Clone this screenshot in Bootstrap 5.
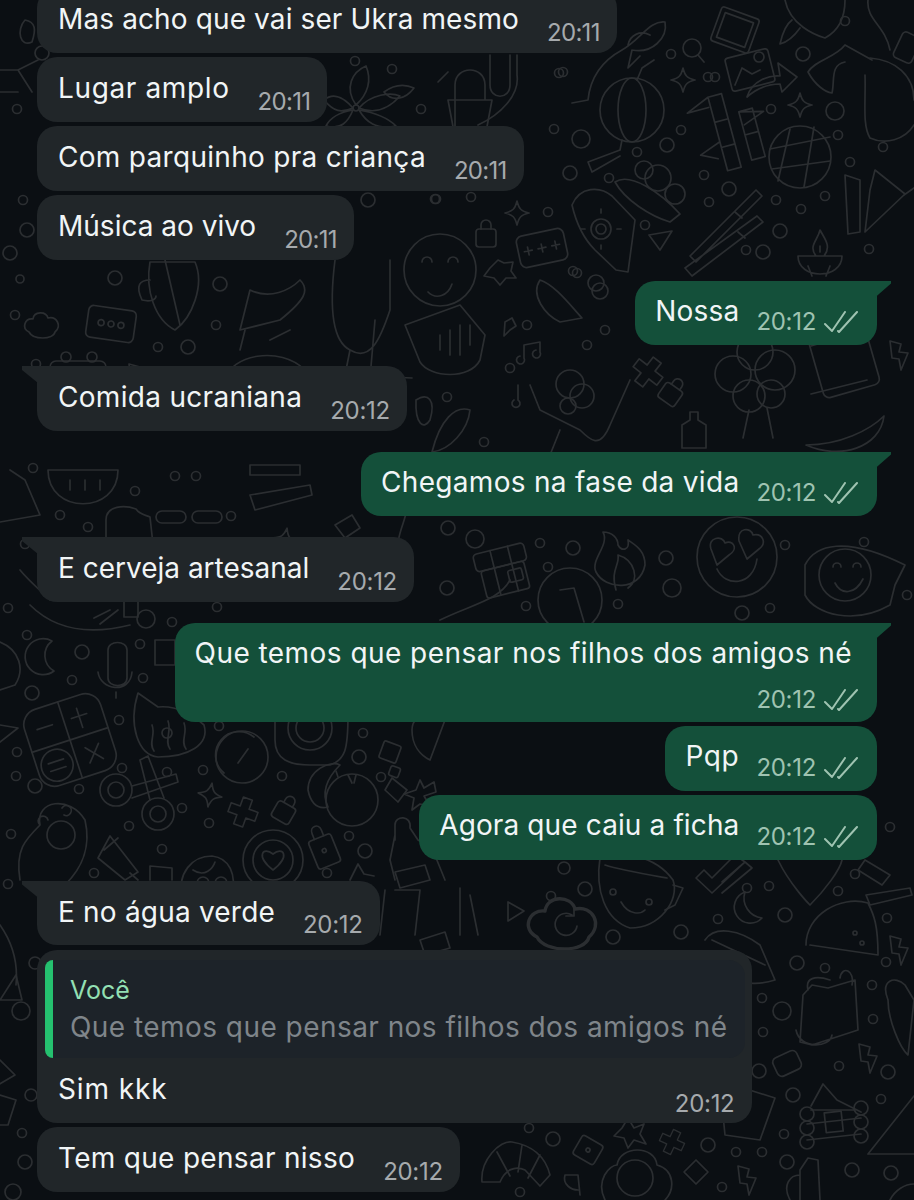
<!DOCTYPE html>
<html lang="pt-br">
<head>
  <meta charset="UTF-8">
  <title>Conversa</title>
  <link href="https://cdn.jsdelivr.net/npm/bootstrap@5.3.2/dist/css/bootstrap.min.css" rel="stylesheet">
  <style>
    body { background: #0b0f13; margin: 0; }
    .chat-screen { width: 914px; height: 1200px; background: #0b0f13; font-family: Inter, "Liberation Sans", sans-serif; }
    .doodles { position: absolute; left: 0; top: 0; }
    .doodles * { fill: none; stroke: #2b2e31; stroke-width: 1.7; stroke-linecap: round; stroke-linejoin: round; }
    .chat-flow { padding: 0 37px; margin-top: -12px; }
    .gap-same { margin-top: 4.5px; }
    .gap-new { margin-top: 21px; }
    .gap-first { margin-top: 0; }
    .bubble-in, .bubble-out { position: relative; border-radius: 20px; color: #f1f5f6; }
    .bubble-in { background: #212629; padding: 0 17px 0 21px; }
    .bubble-out { background: #14503a; padding: 0 19px 0 20px; }
    .has-tail.bubble-in { border-top-left-radius: 0; }
    .has-tail.bubble-out { border-top-right-radius: 0; }
    .has-tail::before { content: ""; position: absolute; top: 0; width: 16px; height: 17px; }
    .has-tail.bubble-in::before { left: -15px; background: #212629; clip-path: polygon(0 0, 100% 0, 100% 100%, 0 4px); }
    .has-tail.bubble-out::before { right: -14px; background: #14503a; clip-path: polygon(0 0, 100% 0, 100% 3px, 0 100%); }
    .msg-text { font-size: 28px; line-height: 36px; padding: 12px 0 16.5px; white-space: nowrap; }
    .bubble-in .msg-text { padding: 13px 0 15.5px; }
    .msg-time { font-size: 24px; line-height: 24px; white-space: nowrap; letter-spacing: -.3px; }
    .bubble-in .msg-time { color: #a6aaad; padding-bottom: 8px; margin-left: 28px; }
    .bubble-in .time-11 { letter-spacing: -.7px; }
    .bubble-out .msg-time { color: #9fc3b1; padding-bottom: 11px; margin-left: 17px; gap: 8px; }
    .ticks { width: 34px; height: 22px; fill: none; stroke: #9fc3b1; stroke-width: 2; stroke-linecap: round; stroke-linejoin: round; }
    .bubble-out.bubble-tall { padding-right: 25px; }
    .bubble-tall .msg-text { padding-bottom: 0; }
    .bubble-tall .msg-time { margin: 17px -6px 0 0; padding-bottom: 10px; }
    .reply-bubble { padding: 10px 7px 0 8px; }
    .reply-box { background: #1d2329; border-radius: 8px 16px 16px 8px; border-left: 8px solid #25c16f; padding: 12px 18px 12px 17px; }
    .reply-name { font-size: 25px; line-height: 36px; color: #93e0b4; }
    .reply-quote { font-size: 28px; line-height: 38px; color: #7f858a; white-space: nowrap; letter-spacing: .45px; }
    .reply-foot { padding: 0 11px 0 13px; }
    .bubble-in .reply-foot .msg-text { padding: 13px 0 16px; }
    .reply-foot .msg-time { padding-bottom: 7px; }
    .track-0 { letter-spacing: 0; }
    .track-1 { letter-spacing: .12px; }
    .track-2 { letter-spacing: .2px; }
    .track-3 { letter-spacing: .3px; }
    .track-4 { letter-spacing: .45px; }
    .track-6 { letter-spacing: .63px; }
    .track-9 { letter-spacing: .9px; }
  </style>
</head>
<body>
  <main class="chat-screen position-relative overflow-hidden">
    <svg class="doodles" id="doodles" width="914" height="1200" viewBox="0 0 914 1200">
      <defs>
        <path id="sparkle" d="M0-12C2-4 4-2 12 0 4 2 2 4 0 12-2 4-4 2-12 0-4-2-2-4 0-12Z"/>
        <path id="bolt" d="M-8-14 3-11 1-3 10-2 3 15 1 4-6 3Z"/>
        <path id="plus" d="M-5-15H5V-5H15V5H5V15H-5V5H-15V-5H-5Z"/>
        <g id="lock"><rect x="-10" y="-6" width="20" height="18" rx="3"/><path d="M-5-6V-10A5 5 0 0 1 5-10V-6"/></g>
        <path id="puff" d="M-14 6C-22 2-18-8-10-7-9-15 3-15 5-8 14-10 19 0 12 6 10 14-10 14-14 6Z"/>
      </defs>
      <!-- topo direito -->
      <path d="M572 103 588 100C590 80 600 62 622 50 640 40 650 20 665 22 668 38 652 54 632 50M632 50 628 68 640 56M650 35C640 30 630 35 628 45"/>
      <circle cx="692" cy="48" r="9"/><path d="M698 55 704 62"/>
      <rect x="-20" y="-18" width="40" height="36" rx="3" transform="translate(735 30) rotate(20)"/>
      <rect x="-15" y="-13" width="30" height="26" transform="translate(735 30) rotate(20)"/>
      <rect x="-22" y="-17" width="44" height="34" rx="3" transform="translate(750 70) rotate(-14)"/>
      <circle cx="759" cy="57" r="5"/><path d="M735 85 742 68 752 74 760 70"/>
      <path d="M747 97C752 80 770 75 780 76L778 63 797 77 782 92 780 84C765 84 755 90 747 97Z"/>
      <path d="M785 0C790 25 815 35 825 38 840 30 845 15 845 0"/>
      <path d="M792 20C785 25 782 35 780 44 788 42 795 35 800 28"/>
      <path d="M808 72C815 60 835 58 845 45L872 60M808 72C815 85 825 92 832 93 835 80 830 65 845 62"/>
      <path d="M868 0C866 20 885 25 890 50M870 58C895 60 914 75 914 100M865 75C866 100 862 125 870 138 885 145 905 140 914 125"/>
      <rect x="-11" y="-14" width="20" height="28" rx="4" transform="translate(908 48) rotate(25)"/>
      <g transform="translate(632 110)"><circle r="32"/><ellipse rx="14" ry="32"/><path d="M5-30 10-42 22-50M-10 30-12 40-44 52-40 62-12 46"/></g>
      <use href="#sparkle" x="683" y="80"/><use href="#sparkle" x="800" y="105"/><use href="#sparkle" x="517" y="213"/>
      <g transform="translate(725 130) rotate(-15)"><path d="M-8-36V40H6V-36ZM-8-10H6M-8 16H6M18-14V36H32V-14ZM18 10H32M-8-36-32-26-10-26M18-14 42-8 20 0M-8 10-30 18-14 26"/></g>
      <g transform="translate(800 157)"><circle r="31"/><path d="M-30-8 30-20M-28 12 30 4M-10-28-22 24M14-30 4 30"/></g>
      <path d="M455 130V85C455 65 485 65 485 85V100M448 100H492L486 132H454ZM448 72 438 82"/>
      <path d="M517 55V75C520 95 500 115 478 125M490 55V85C490 100 510 100 510 85V55"/>
      <path d="M384 92C395 84 405 84 414 88 405 100 392 102 384 92Z"/>
      <path d="M572 205C580 186 600 186 612 196L635 220 628 272 616 270 595 250C580 235 575 218 572 205Z"/>
      <g transform="translate(601 229)"><circle r="5"/><circle r="10"/><path d="M0-16V-20M0 16V20M16 0H20M-16 0H-20"/></g>
      <g transform="translate(650 190)"><circle cx="-6" cy="-20" r="9"/><circle cx="8" cy="-12" r="13"/><circle cx="25" cy="4" r="10"/><path d="M-35-8C-20-18 10 2 30 24L20 32C0 26-25 10-35-8Z"/></g>
      <path d="M690 256 756 190 762 196 696 262ZM685 268 757 216 763 222 692 276ZM735 212 742 218M738 232 745 238"/>
      <g transform="translate(542 248) rotate(-12)"><rect x="-24" y="-16" width="48" height="32" rx="6"/><path d="M-14-4V4M-18 0H-10M0-4V4M-4 0H4M14-4V4M10 0H18"/></g>
      <use href="#lock" x="486" y="235"/>
      <g transform="translate(440 270)"><circle r="36"/><path d="M-18-8A5 5 0 0 1-8-8M8-8A5 5 0 0 1 18-8M-12 22C-4 30 8 26 12 14"/></g>
      <path d="M498 260 504 263 513 262 511 271 516 278 506 278 500 285 494 278 484 276 490 268Z"/>
      <path d="M649 235 672 231 660 250Z"/>
      <path d="M845 175 860 180 860 232 848 234ZM875 170 905 194 865 232 870 190ZM904 195 914 188"/>
      <g transform="translate(820 260)"><path d="M-22-4H22C22 20-22 20-22-4ZM-4-4C-12-14-2-20 0-30 4-22 12-14 4-4ZM0-8V-14M-12 6-8 16M10 6 6 16"/></g>
      <g transform="translate(356 108)"><circle r="3"/><path d="M0-3C-12-20-4-36 10-42 16-28 12-14 0-3ZM3 0C15-14 35-16 44-12 30 4 15 5 3 0ZM-3 0C-15-14-25-14-32-8-22 4-15 5-3 0ZM3 2C15 4 30 8 40 18 20 22 10 14 3 2ZM-3 2C-15 4-25 8-30 18-15 22-8 14-3 2Z"/></g>
      <path d="M0 70H18L38 60M18 70 32 92M-4 92 18 92"/>
      <path d="M25 20C16 30 20 48 32 42 36 30 36 22 25 20Z"/>
      <!-- meio -->
      <g transform="translate(845 360)"><rect x="-30" y="-30" width="58" height="62" rx="6" transform="rotate(-16)"/><path d="M-34-14 20-30M-34 34 22 20"/></g>
      <g transform="translate(755 380)"><circle cx="-22" cy="-6" r="18"/><circle cx="20" cy="-10" r="20"/><circle cx="0" cy="-28" r="18"/><circle cx="-6" cy="16" r="16"/><circle cx="16" cy="14" r="14"/><path d="M-6 30-12 58M12 28 18 58"/></g>
      <use href="#bolt" x="898" y="355"/>
      <use href="#plus" transform="translate(648 372) rotate(38)"/>
      <use href="#lock" transform="translate(672 392) rotate(35)"/>
      <path d="M806 445C840 445 870 430 884 416 880 448 840 460 806 445Z"/>
      <path d="M690 420V412H698V420L706 425V448H682V425Z"/>
      <g transform="translate(111 324) rotate(8)"><rect x="-24" y="-16" width="48" height="32" rx="5"/><circle cx="-10" r="3"/><circle r="3"/><circle cx="10" r="3"/></g>
      <use href="#puff" transform="translate(43 326)"/>
      <path d="M150 262C145 290 155 320 175 330 192 318 205 285 195 262ZM165 260 180 325M150 280C140 280 135 285 142 300 150 302 156 300 156 296"/>
      <path d="M240 330 250 290C270 300 290 290 300 280 310 290 305 300 280 320Z"/>
      <path d="M335 260C330 300 330 340 350 350 370 362 380 340 390 310V260M350 350 345 375 412 378M375 320 370 378"/>
      <path d="M405 325 460 305 485 335 480 360C470 380 430 378 420 362ZM440 335V350M450 330V355M460 325V355M470 325V345"/>
      <path d="M505 322 512 318 516 326 510 330 504 336Z"/>
      <path d="M540 280C555 285 570 305 582 318L560 322C545 315 530 295 540 280Z"/>
      <path d="M524 358 524 345 540 342 540 352M524 358A4 4 0 1 1 520 356M540 352A4 4 0 1 1 536 350"/>
      <path d="M518 385V400A4 4 0 1 1 514 400"/>
      <g transform="translate(570 400)"><circle cx="0" cy="-16" r="14"/><circle cx="12" cy="-4" r="12"/><circle cx="-2" cy="6" r="8"/><path d="M-40-15-30 10-10 20 10 30C20 40 30 50 40 25L60-20M-10 30-20 55"/></g>
      <path d="M432 452C440 420 455 405 470 410 468 430 450 450 432 452Z"/>
      <path d="M416 400C428 392 436 400 430 420 424 430 415 425 416 400Z"/>
      <path d="M225 380C230 355 280 345 305 370L290 385M240 350 245 330M270 340 290 330"/>
      <use href="#bolt" x="137" y="378"/>
      <g transform="translate(80 375)"><rect x="-30" y="-14" width="56" height="50" rx="6"/><circle cx="-14" cy="-18" r="5"/><circle cx="12" cy="-18" r="5"/></g>
      <path d="M165 385 195 370 210 388 210 420H165Z"/>
      <path d="M48 470H118C118 515 48 515 48 470ZM70 480V490M85 480V490M100 480V490"/>
      <path d="M0 522 40 515 25 480 10 470"/>
      <path d="M250 475H300V465H250ZM250 495 310 485 312 495 255 510Z"/>
      <rect x="156" y="511" width="30" height="12" rx="6"/><rect x="192" y="511" width="30" height="12" rx="6"/><rect x="205" y="548" width="30" height="12" rx="6"/><rect x="240" y="548" width="30" height="12" rx="6"/><rect x="253" y="579" width="30" height="12" rx="6"/>
      <g transform="translate(130 545)"><path d="M-24 50V-25C-24-40-5-40 6-36 10-30 16-30 20-28L28 45C10 55-10 55-24 50ZM-14-4-6 0-14 4M10-4 2 0 10 4M-6 14H8C8 30-4 30-6 14ZM-6 50V72H8V50"/></g>
      <use href="#sparkle" transform="translate(176 555) rotate(10)"/><use href="#sparkle" transform="translate(285 540) rotate(10)"/><use href="#sparkle" transform="translate(410 482) rotate(10)"/>
      <path d="M20 570C28 580 40 590 50 600L75 590C65 575 50 560 40 540"/>
      <path d="M335 525 352 515 360 528 345 538ZM325 540 340 555 335 575 370 590"/>
      <path d="M400 490C420 510 390 530 400 560"/>
      <g transform="translate(503 570) rotate(-14)"><rect x="-26" y="-22" width="52" height="18" rx="4"/><rect x="-22" y="-4" width="44" height="28" rx="3"/><path d="M-8-22V-4M10-22V-4M-8-4V24M10-4V24"/><rect x="4" y="2" width="14" height="12" rx="2"/></g>
      <path d="M603 532C610 545 590 560 596 572 605 590 640 592 645 565 645 550 635 545 628 540 630 550 622 552 618 545 618 538 612 532 603 532ZM616 590C610 570 620 565 618 555 635 560 640 580 628 588"/>
      <g transform="translate(737 557)"><circle r="40"/><path d="M-26-8C-30-20-14-22-12-14-4-18 2-8-8-2L-20 8ZM2-16C0-30 14-30 16-22 26-24 30-14 22-8L10 2ZM-20 12C-12 30 16 30 20 2"/></g>
      <g transform="translate(845 575)"><path d="M-40-10C-30-30 0-40 60-10L50 10 45 30C10 50-30 40-40 20Z"/><circle r="26"/><path d="M-12-8A4 4 0 0 1-4-8M8-8A4 4 0 0 1 16-8M-10 8C-4 20 10 20 18 4"/></g>
      <g transform="translate(570 600)"><circle r="32"/><path d="M-10-10 4-12 14 22"/></g>
      <path d="M440 620C470 605 500 600 510 580"/>
      <g transform="translate(70 740) rotate(-18)"><rect x="-40" y="-40" width="80" height="80" rx="16"/><path d="M0-40V40M-40 0H40M-28-20H-12M16-28V-8M8-20H24M12 12 26 28M26 12 12 28"/><circle cx="-20" cy="20" r="16"/><path d="M-28 16H-12M-28 24H-12"/></g>
      <g transform="translate(168 725)"><path d="M-30-32-10-18C10-20 25-10 36 0 42 20 20 32-10 32-30 30-40 0-30-32Z"/><path d="M-16 0C-12 10-20 18-14 26M0-4C4 6-4 16 2 24M16-2C20 8 12 16 18 24"/><circle cx="-1" cy="8" r="5"/></g>
      <g transform="translate(242 757)"><circle r="26"/><path d="M-18 16A22 22 0 0 1 12-20M6-8-4 6"/></g>
      <g transform="translate(140 790)"><circle cx="-24" cy="0" r="16"/><circle cx="-24" r="8"/><circle cx="18" cy="24" r="16"/><circle cx="18" cy="24" r="8"/><path d="M-8-4 36-16 38-8-8 8M10 10 0-30 8-34 24 8"/></g>
      <path d="M20 880C15 850 25 840 40 825 35 800 70 795 85 820 92 850 80 870 65 885M40 825A5 5 0 1 1 48 820M62 808A5 5 0 1 1 64 815"/>
      <circle cx="61" cy="835" r="14"/>
      <path d="M52 641A18 18 0 1 0 54 671 18 18 0 0 1 52 641Z"/>
      <path d="M108 670V650C108 640 127 640 127 650V678C127 688 108 688 108 678ZM98 672C100 690 130 695 132 672M116 692V698"/>
      <path d="M0 642C20 650 25 670 15 685L0 690M0 725 18 728 0 742"/>
      <path d="M30 605C55 630 90 635 130 625"/>
      <path d="M94 618 110 610M100 624 118 610"/>
      <path d="M155 640 175 640 175 665 155 665Z"/>
      <g transform="translate(310 730)"><path d="M-35-15V10C-35 30-20 35 0 35H20C35 30 38 20 38-15"/><circle cy="-2" r="14"/><circle cy="-2" r="22"/></g>
      <path d="M412 730C412 710 440 710 445 720L430 760C420 755 412 745 412 730Z"/>
      <g transform="translate(340 795)"><path d="M-32-5C-32-25-10-35 0-30-10-20-20-5-12 12-25 15-30 5-32-5Z"/><circle cx="12" cy="5" r="26"/><path d="M8-20 12-12M16-20 14-12M-4-24-2-18"/></g>
      <use href="#lock" transform="translate(285 810) rotate(30)"/>
      <use href="#sparkle" transform="translate(210 795) rotate(10)"/>
      <use href="#plus" transform="translate(243 812) rotate(20) scale(.95)"/>
      <g transform="translate(273 860)"><circle r="30"/><circle r="20"/><path d="M0 10C-18-4-10-14 0-6 10-14 18-4 0 10Z"/></g>
      <g transform="translate(207 878)"><path d="M-25 20C-30-5-15-22 5-22 22-20 30-5 25 20M-14-8C-2 0 6-10 8-16"/><circle cx="-4" cy="5" r="6"/><circle cx="14" cy="5" r="6"/></g>
      <path d="M98 858 110 836 138 872 125 880ZM104 850 118 838M130 873 138 880"/>
      <path d="M150 880 150 866 172 868 172 880"/>
      <g transform="translate(322 845) rotate(-22)"><rect x="-12" y="-8" width="24" height="30" rx="3"/><path d="M-5-8V-14C-5-22 5-22 5-14V-8"/><circle cy="6" r="2"/></g>
      <path d="M350 880 358 864 364 874 374 876"/>
      <path d="M395 840V825C395 815 412 815 410 828L418 840 432 848 445 880M395 835 390 860 395 880"/>
      <rect x="-8" y="-8" width="14" height="14" rx="2" transform="translate(393 578) rotate(20)"/>
      <g transform="translate(390 752)"><rect x="-9" y="-9" width="18" height="18" rx="2" transform="rotate(20)"/><rect x="6" y="12" width="10" height="10" rx="2" transform="rotate(20)"/></g>
      <path d="M392 778 407 790 398 802 385 790Z"/>
      <path d="M420 780 424 788 434 782 436 792 424 796 430 806 420 804 412 810 414 798 404 794 416 790Z"/>
      <!-- baixo -->
      <path d="M395 890H420L415 935M460 888V935M470 895 478 935M385 890 380 935"/>
      <path d="M395 872 425 865 430 880 400 888ZM420 940 445 932 450 948 425 955Z"/>
      <g transform="translate(635 880)"><path d="M-35-22C-15-30 20-25 38 0 45 20 25 48-5 48-30 40-40 10-35-22ZM-30-15C-15-10 15-5 32-2"/><circle cx="-22" cy="12" r="3"/><circle cx="14" cy="22" r="3"/><path d="M-14 22C-6 36 6 34 10 30M38 5 48 8 40 25 30 30"/></g>
      <path d="M508 902 508 921 524 911Z"/>
      <use href="#puff" transform="translate(565 925) scale(2)"/>
      <path d="M572 915A11 11 0 1 0 577 926M574 908 574 916 566 916"/>
      <path d="M696 878 704 870 712 878 735 855 745 862 712 893ZM722 882 745 862 752 868 722 893"/>
      <path d="M745 892A16 16 0 1 0 762 918 20 20 0 0 1 745 892Z"/>
      <path d="M778 860C790 885 810 905 810 905 825 890 840 870 842 860"/>
      <path d="M865 860 890 875 882 885 858 870ZM866 895 910 888 912 895 870 905Z"/>
      <g transform="translate(840 925)"><path d="M-34 20C-34-10 0-30 28-22 34-10 38 0 38 30L-30 20"/><circle cx="15" cy="8" r="2"/><circle cx="22" cy="18" r="2"/></g>
      <path d="M705 940C715 925 740 930 760 945L775 980C760 985 740 985 730 975M712 940 765 965"/>
      <use href="#bolt" x="898" y="950"/>
      <path d="M800 1042 803 995 812 985 828 988 838 985 855 980 858 1030 812 1045ZM808 990C805 978 815 975 830 980M840 978C842 965 855 970 852 985M796 1030C800 1050 830 1048 832 1035"/>
      <path d="M888 1000C880 980 895 975 905 985L914 1000 908 1055C900 1048 888 1020 888 1000Z"/>
      <g transform="translate(833 1120)"><path d="M-22-14 -10-36 4-20 28-8M-22-10H22M-26 20 28 14M-26 4 28-2"/><circle cx="-26" cy="-6" r="7"/><circle cx="-26" cy="8" r="7"/><circle cx="-26" cy="22" r="7"/><circle cx="28" cy="-12" r="7"/><circle cx="28" cy="2" r="7"/><circle cx="28" cy="16" r="7"/><rect x="-8" y="-8" width="17" height="20" transform="rotate(-6)"/></g>
      <path d="M868 1154 914 1096M868 1154H914"/>
      <path d="M740 1087 775 1098 760 1140 725 1135 722 1105"/>
      <use href="#bolt" x="867" y="1058"/>
      <rect x="-14" y="-10" width="26" height="20" rx="5" transform="translate(788 1063) rotate(-25)"/>
      <g transform="translate(588 1150) rotate(30)"><rect x="-12" y="-11" width="24" height="22" rx="3"/><circle r="2"/></g>
      <use href="#plus" transform="translate(672 1142) rotate(25) scale(.8)"/>
      <path d="M628 1118 634 1128 644 1124 640 1134 646 1144 634 1140 628 1148 624 1138 614 1136 622 1128Z"/>
      <path d="M482 1182C480 1160 500 1140 512 1142 530 1145 545 1155 550 1175L540 1186 525 1170C515 1165 505 1170 500 1182ZM497 1152 510 1176M522 1145 518 1172M540 1155 528 1178"/>
      <path d="M565 1175H578L580 1195M565 1175C562 1185 572 1190 578 1190"/>
      <g transform="translate(635 1170)"><path d="M-30 30C-40 10-25-5-18-5-15-25 20-25 22-5 40 0 40 20 30 30"/><circle cy="8" r="18"/></g>
      <path d="M696 1160 708 1172 696 1184 684 1172Z"/>
      <use href="#bolt" x="746" y="1180"/>
      <path d="M800 1200V1170L808 1158 818 1160 820 1200M790 1200C782 1185 790 1175 800 1175"/>
      <path d="M890 1200C895 1190 905 1184 914 1184"/>
      <path d="M0 1000 16 975 22 1000ZM0 1060 15 1075-2 1085M0 1095 16 1100 8 1125H0"/>
      <path d="M0 925C14 945 18 965 16 985"/>
    </svg>

    <div class="chat-flow position-relative d-flex flex-column">
      <div class="d-flex gap-first">
        <div class="bubble-in d-flex align-items-end"><span class="msg-text track-1">Mas acho que vai ser Ukra mesmo</span><span class="msg-time time-11">20:11</span></div>
      </div>
      <div class="d-flex gap-same">
        <div class="bubble-in d-flex align-items-end"><span class="msg-text track-6">Lugar amplo</span><span class="msg-time time-11">20:11</span></div>
      </div>
      <div class="d-flex gap-same">
        <div class="bubble-in d-flex align-items-end"><span class="msg-text track-3">Com parquinho pra criança</span><span class="msg-time time-11">20:11</span></div>
      </div>
      <div class="d-flex gap-same">
        <div class="bubble-in d-flex align-items-end"><span class="msg-text track-0">Música ao vivo</span><span class="msg-time time-11">20:11</span></div>
      </div>

      <div class="d-flex justify-content-end gap-new">
        <div class="bubble-out has-tail d-flex align-items-end"><span class="msg-text track-2">Nossa</span><span class="msg-time d-flex align-items-center">20:12 <svg class="ticks" viewBox="0 0 34 22"><path d="M1 13 8 20 21 1M14 20 15 21 33 1"/></svg></span></div>
      </div>
      <div class="d-flex gap-new">
        <div class="bubble-in has-tail d-flex align-items-end"><span class="msg-text track-3">Comida ucraniana</span><span class="msg-time">20:12</span></div>
      </div>
      <div class="d-flex justify-content-end gap-new">
        <div class="bubble-out has-tail d-flex align-items-end"><span class="msg-text track-3">Chegamos na fase da vida</span><span class="msg-time d-flex align-items-center">20:12 <svg class="ticks" viewBox="0 0 34 22"><path d="M1 13 8 20 21 1M14 20 15 21 33 1"/></svg></span></div>
      </div>
      <div class="d-flex gap-new">
        <div class="bubble-in has-tail d-flex align-items-end"><span class="msg-text track-0">E cerveja artesanal</span><span class="msg-time">20:12</span></div>
      </div>
      <div class="d-flex justify-content-end gap-new">
        <div class="bubble-out bubble-tall has-tail d-flex flex-column"><span class="msg-text track-4">Que temos que pensar nos filhos dos amigos né</span><span class="msg-time d-flex align-items-center align-self-end">20:12 <svg class="ticks" viewBox="0 0 34 22"><path d="M1 13 8 20 21 1M14 20 15 21 33 1"/></svg></span></div>
      </div>
      <div class="d-flex justify-content-end gap-same">
        <div class="bubble-out d-flex align-items-end"><span class="msg-text track-6">Pqp</span><span class="msg-time d-flex align-items-center">20:12 <svg class="ticks" viewBox="0 0 34 22"><path d="M1 13 8 20 21 1M14 20 15 21 33 1"/></svg></span></div>
      </div>
      <div class="d-flex justify-content-end gap-same">
        <div class="bubble-out d-flex align-items-end"><span class="msg-text track-1">Agora que caiu a ficha</span><span class="msg-time d-flex align-items-center">20:12 <svg class="ticks" viewBox="0 0 34 22"><path d="M1 13 8 20 21 1M14 20 15 21 33 1"/></svg></span></div>
      </div>

      <div class="d-flex gap-new">
        <div class="bubble-in has-tail d-flex align-items-end"><span class="msg-text track-2">E no água verde</span><span class="msg-time">20:12</span></div>
      </div>
      <div class="d-flex gap-same">
        <div class="bubble-in reply-bubble">
          <div class="reply-box">
            <div class="reply-name">Você</div>
            <div class="reply-quote">Que temos que pensar nos filhos dos amigos né</div>
          </div>
          <div class="reply-foot d-flex justify-content-between align-items-end"><span class="msg-text track-9">Sim kkk</span><span class="msg-time">20:12</span></div>
        </div>
      </div>
      <div class="d-flex gap-same">
        <div class="bubble-in d-flex align-items-end"><span class="msg-text track-3">Tem que pensar nisso</span><span class="msg-time">20:12</span></div>
      </div>
    </div>
  </main>

  <script src="https://cdn.jsdelivr.net/npm/bootstrap@5.3.2/dist/js/bootstrap.bundle.min.js"></script>
  <script>
    // bolinhas soltas do papel de parede: x, y, raio
    const bolinhas = [[392,69,4.5],[421,109,4.5],[559,73,4.5],[554,129,4.5],[581,139,9],[570,173,7],[609,178,4.5],[637,152,4.5],[667,145,7],[708,77,4.5],[681,130,4.5],[704,175,4.5],[729,189,7],[709,202,4.5],[771,109,4.5],[835,111,9],[838,135,4.5],[883,147,4.5],[850,162,4.5],[825,196,4.5],[801,209,4.5],[776,200,4.5],[780,231,7],[763,252,7],[746,250,4.5],[869,249,4.5],[645,225,4.5],[573,271,4.5],[596,283,8],[435,199,4.5],[471,197,4.5],[548,212,4.5],[563,72,4.5],[671,54,4.5],[715,77,4.5],[803,54,7],[845,21,4.5],
      [20,279,4],[115,278,7],[220,284,7],[15,315,4.5],[216,325,4.5],[158,347,4.5],[188,347,7],[36,364,4.5],[510,368,4.5],[527,325,4.5],[577,273,4.5],[600,291,8],[605,330,4.5],[587,345,4.5],[447,397,4.5],[484,442,4.5],[442,465,4.5],[33,468,4.5],[175,476,4.5],[196,476,4.5],[135,491,4.5],[60,515,4.5],[88,527,4.5],[231,516,4.5],[25,544,4.5],[87,557,7],[305,567,7],[198,575,4.5],[244,585,4.5],[447,588,7],
      [448,528,7],[475,539,9],[540,543,4.5],[573,548,7],[548,567,4.5],[666,558,7],[672,588,9],[526,606,4.5],[618,604,4.5],[742,613,7],[770,608,4.5],[785,545,4.5],[864,542,4.5],[907,595,4.5],
      [8,608,4.5],[27,635,4.5],[82,652,7],[72,680,4.5],[32,693,7],[146,619,9],[172,622,4.5],[140,644,4.5],[143,678,4.5],[217,607,4.5],[119,720,4.5],[17,752,4.5],[16,776,4.5],[35,786,7],[79,789,4.5],[122,768,4.5],[167,772,4.5],[203,770,4.5],[182,808,4.5],[129,826,4.5],[209,823,4.5],[162,849,4.5],[94,873,4.5],[11,834,4.5],[8,884,4.5],[282,776,4.5],[359,757,7],[381,777,4.5],[363,733,4.5],[349,836,4.5],[365,851,7],[327,873,4.5],[219,726,4.5],
      [564,868,6],[585,889,7],[551,896,4.5],[613,937,7],[681,932,7],[718,919,4.5],[747,888,4.5],[769,886,4.5],[785,915,7],[838,891,4.5],[855,874,4.5],[890,827,4.5],[887,918,4.5],
      [797,963,7],[825,968,4.5],[886,962,4.5],[762,998,4.5],[782,1011,9],[872,985,4.5],[873,1019,4.5],[763,1032,4.5],[759,1071,7],[839,1066,4.5],[888,1072,7],[793,1095,7],[881,1099,4.5],[784,1134,4.5],[736,1152,4.5],[762,1152,4.5],[787,1162,7],[852,1170,7],[891,1173,7],[708,1145,7],[553,1139,7],[529,1128,4.5],[722,1187,4.5],[520,1192,4.5],
      [21,1011,9],[35,963,6],[31,1095,6],[22,1133,4.5],[25,1162,7],[13,1192,8],[23,200,4.5],[42,53,7],[17,109,4.5],[27,230,7],[10,253,7],[355,61,4.5],[368,200,7],[436,199,4.5]];

    let svg = document.getElementById("doodles");
    for (let i = 0; i < bolinhas.length; i++) {
      let c = document.createElementNS("http://www.w3.org/2000/svg", "circle");
      c.setAttribute("cx", bolinhas[i][0]);
      c.setAttribute("cy", bolinhas[i][1]);
      c.setAttribute("r", bolinhas[i][2]);
      svg.appendChild(c);
    }
  </script>
</body>
</html>
